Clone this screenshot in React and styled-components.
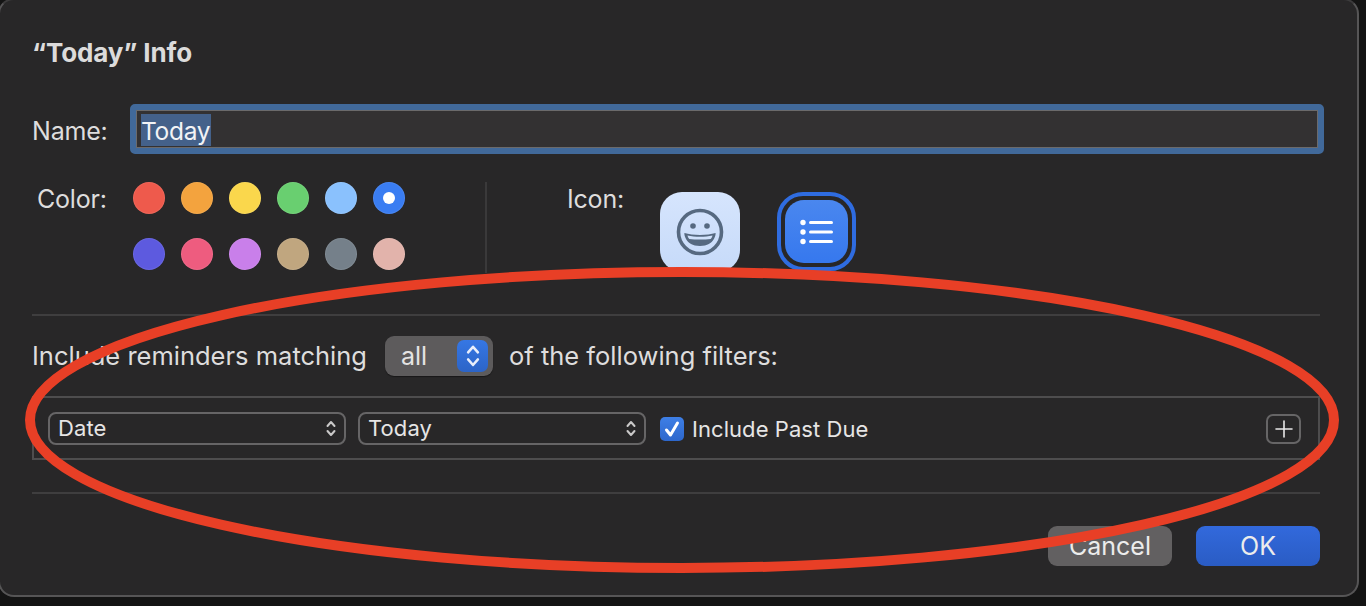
import React from "react";
import styled, { createGlobalStyle } from "styled-components";

const Global = createGlobalStyle`
  html, body {
    margin: 0;
    height: 606px;
    overflow: hidden;
    background: #141414;
  }
  * { box-sizing: border-box; }
`;

const Page = styled.div`
  position: relative;
  width: 1366px;
  height: 606px;
  overflow: hidden;
  background: #141414;
  font-family: Inter, "Liberation Sans", sans-serif;
  color: #dedddd;
`;

/* 창 전체, 왼쪽 위는 화면 밖으로 살짝 잘림 */
const Sheet = styled.div`
  width: 1361px;
  height: 599px;
  margin: -2px 0 0 -2px;
  padding: 0 37px 0 34px;
  background: #282728;
  border: 2px solid #565556;
  border-top-color: #3c3b3c;
  border-radius: 16px;
  display: flex;
  flex-direction: column;
`;

const Title = styled.h1`
  margin: 39px 0 0 -2px;
  height: 28px;
  font-size: 26px;
  line-height: 28px;
  font-weight: 700;
  letter-spacing: -0.1px;
  color: #dcdbdb;
`;

const NameRow = styled.div`
  display: flex;
  align-items: center;
  margin: 37px 0 0 -2px;
  height: 50px;
`;

const Label = styled.span`
  font-size: 25px;
  line-height: 30px;
  letter-spacing: -0.2px;
  color: #dedddd;
`;

const MatchLabel = styled(Label)`
  font-size: 25.5px;
  letter-spacing: 0;
`;

const NameLabel = styled(Label)`
  width: 98px;
  padding-top: 4px;
`;

const NameField = styled.div`
  flex: 1;
  height: 50px;
  margin-right: -4px;
  border: 6px solid #41699a;
  border-radius: 5px;
  padding: 4px 5px 0;
  background: #333132;
  box-shadow: inset 0 0 0 1px #6b6a6b;
`;

const Selected = styled.span`
  display: inline-block;
  height: 32px;
  padding: 0 1px 0 0;
  background: #44618a;
  font-size: 24.5px;
  line-height: 35px;
  letter-spacing: -0.3px;
  color: #f2f3f5;
`;

const Appearance = styled.div`
  display: flex;
  margin-top: 28px;
  height: 91px;
`;

const ColorSection = styled.div`
  display: flex;
  width: 453px;
  height: 91px;
  border-right: 2px solid #3a393a;
`;

const ColorLabel = styled(Label)`
  width: 96px;
  margin: 2px 0 0 3px;
`;

const Swatches = styled.div`
  display: grid;
  grid-template-columns: repeat(6, 32px);
  grid-auto-rows: 32px;
  gap: 24px 16px;
`;

const Swatch = styled.div`
  width: 32px;
  height: 32px;
  border-radius: 50%;
  background: ${(p) => p.$color};
  box-shadow: inset 0 0 0 1px rgba(255, 255, 255, 0.08);
  display: flex;
  align-items: center;
  justify-content: center;
`;

const SwatchDot = styled.div`
  width: 12px;
  height: 12px;
  border-radius: 50%;
  background: #fff;
`;

const IconSection = styled.div`
  display: flex;
  margin-left: 80px;
`;

const IconLabel = styled(Label)`
  width: 93px;
  margin-top: 2px;
`;

const IconTile = styled.div`
  width: 80px;
  height: 80px;
  margin-top: 10px;
  border-radius: 22px;
  background: linear-gradient(#d6e5fd, #c6daf9);
  display: flex;
  align-items: center;
  justify-content: center;
`;

const ListTile = styled.div`
  width: 79px;
  height: 79px;
  margin: 10px 0 0 37px;
  border-radius: 26px;
  border: 4px solid #2f6ce0;
  padding: 4px;
`;

const ListFace = styled.div`
  width: 100%;
  height: 100%;
  border-radius: 19px;
  background: linear-gradient(#4a87ef, #3678ee);
  display: flex;
  align-items: center;
  justify-content: center;
`;

const Rule = styled.hr`
  margin: ${(p) => p.$top}px 0 0 -2px;
  border: 0;
  height: 2px;
  background: #3f3e3f;
`;

const MatchRow = styled.div`
  display: flex;
  align-items: center;
  height: 40px;
  margin: 20px 0 0 -2px;
`;

const AllSelect = styled.div`
  width: 108px;
  height: 40px;
  margin: 0 16px 0 18px;
  padding: 4px 5px 4px 16px;
  border-radius: 9px;
  background: #5d5b5c;
  box-shadow: 0 1px 1px rgba(0, 0, 0, 0.4);
  display: flex;
  align-items: center;
  justify-content: space-between;
  font-size: 25px;
  color: #e4e3e3;
`;

const Stepper = styled.div`
  width: 31px;
  height: 32px;
  border-radius: 7px;
  background: linear-gradient(#3677e4, #2c64c7);
  display: flex;
  align-items: center;
  justify-content: center;
`;

const FilterBox = styled.div`
  display: flex;
  align-items: center;
  height: 64px;
  margin: 20px 0 0 -2px;
  padding: 0 17px 0 14px;
  border: 2px solid #4e4d4e;
`;

const Popup = styled.div`
  width: ${(p) => p.$width}px;
  height: 33px;
  margin-right: ${(p) => p.$gap}px;
  padding: 0 8px;
  border: 2px solid #666566;
  border-radius: 8px;
  display: flex;
  align-items: center;
  justify-content: space-between;
  font-size: 22px;
  letter-spacing: 0.1px;
  color: #e6e5e5;
`;

const Check = styled.div`
  width: 24px;
  height: 24px;
  margin: 2px 8px 0 2px;
  border-radius: 5px;
  background: linear-gradient(#3e7fe6, #2d67cc);
  display: flex;
  align-items: center;
  justify-content: center;
`;

const CheckLabel = styled.span`
  flex: 1;
  margin-top: 2px;
  font-size: 22px;
  letter-spacing: 0.06px;
  color: #e6e5e5;
`;

const PlusButton = styled.div`
  width: 35px;
  height: 30px;
  margin-top: 1px;
  border: 2px solid #666566;
  border-radius: 7px;
  display: flex;
  align-items: center;
  justify-content: center;
`;

const Actions = styled.div`
  display: flex;
  justify-content: flex-end;
  gap: 24px;
  margin-top: 32px;
`;

const Button = styled.div`
  width: 124px;
  height: 40px;
  border-radius: 9px;
  background: ${(p) => (p.$primary ? "linear-gradient(#3269dc, #2a5cc4)" : "#626061")};
  display: flex;
  align-items: center;
  justify-content: center;
  font-size: 25px;
  color: #ececec;
`;

/* 빨간 동그라미 표시는 화면 위에 덮어 그림 */
const Annotation = styled.svg`
  position: absolute;
  inset: 0;
  pointer-events: none;
`;

const SmileIcon = () => (
  <svg width="48" height="48" viewBox="0 0 48 48">
    <circle cx="24" cy="24" r="21.5" fill="none" stroke="#566980" strokeWidth="3.6" />
    <circle cx="17" cy="18" r="2.8" fill="#566980" />
    <circle cx="31" cy="18" r="2.8" fill="#566980" />
    <path d="M8.500 25c8 2.600 23 2.600 31 0 .6 0-.4 13-15.500 13S7.900 25 8.500 25Z" fill="#566980" />
    <path d="M11.500 27.500c7.500 1.700 17.500 1.700 25 0-.3 1.500-1 2.600-1.800 3.400-6.500.9-14.900.9-21.400 0-.8-.8-1.500-1.900-1.800-3.400Z" fill="#d0e1fb" />
  </svg>
);

const ListIcon = () => (
  <svg width="36" height="30" viewBox="0 0 36 30">
    <circle cx="4" cy="5.500" r="2.700" fill="#fff" />
    <circle cx="4" cy="15" r="2.700" fill="#fff" />
    <circle cx="4" cy="24.500" r="2.700" fill="#fff" />
    <rect x="10" y="4" width="24" height="3" rx="1.500" fill="#fff" />
    <rect x="10" y="13.500" width="24" height="3" rx="1.500" fill="#fff" />
    <rect x="10" y="23" width="24" height="3" rx="1.500" fill="#fff" />
  </svg>
);

const Chevrons = ({ size = 10, color = "#c9c8c8", width = 2 }) => (
  <svg width={size} height={size * 1.7} viewBox="0 0 10 17" fill="none" stroke={color} strokeWidth={width} strokeLinecap="round" strokeLinejoin="round">
    <path d="M1.500 6 5 2l3.500 4" />
    <path d="M1.500 11 5 15l3.500-4" />
  </svg>
);

const colors = [
  "#ee5a4c", "#f3a33e", "#fad74c", "#69cf70", "#8ac1fd", "#3a7df2",
  "#5d5adf", "#ee5c7f", "#c97fea", "#c0a67f", "#75808a", "#e2b3ab",
];

export default function App() {
  return (
    <Page>
      <Global />
      <Sheet>
        <Title>“Today” Info</Title>
        <NameRow>
          <NameLabel>Name:</NameLabel>
          <NameField>
            <Selected>Today</Selected>
          </NameField>
        </NameRow>
        <Appearance>
          <ColorSection>
            <ColorLabel>Color:</ColorLabel>
            <Swatches>
              {colors.map((c, i) => (
                <Swatch key={c} $color={c}>{i === 5 && <SwatchDot />}</Swatch>
              ))}
            </Swatches>
          </ColorSection>
          <IconSection>
            <IconLabel>Icon:</IconLabel>
            <IconTile><SmileIcon /></IconTile>
            <ListTile>
              <ListFace><ListIcon /></ListFace>
            </ListTile>
          </IconSection>
        </Appearance>
        <Rule $top={41} />
        <MatchRow>
          <MatchLabel>Include reminders matching</MatchLabel>
          <AllSelect>
            all
            <Stepper><Chevrons size={14} color="#e8eefb" width={1.800} /></Stepper>
          </AllSelect>
          <MatchLabel>of the following filters:</MatchLabel>
        </MatchRow>
        <FilterBox>
          <Popup $width={298} $gap={12}>Date<Chevrons /></Popup>
          <Popup $width={288} $gap={12}>Today<Chevrons /></Popup>
          <Check>
            <svg width="18" height="18" viewBox="0 0 18 18" fill="none" stroke="#fff" strokeWidth="3" strokeLinecap="round" strokeLinejoin="round">
              <path d="M3.500 10 7.500 15 14.500 3" />
            </svg>
          </Check>
          <CheckLabel>Include Past Due</CheckLabel>
          <PlusButton>
            <svg width="20" height="20" viewBox="0 0 20 20" stroke="#e8e8e8" strokeWidth="1.600" strokeLinecap="round">
              <path d="M10 2v16M2 10h16" />
            </svg>
          </PlusButton>
        </FilterBox>
        <Rule $top={32} />
        <Actions>
          <Button>Cancel</Button>
          <Button $primary>OK</Button>
        </Actions>
      </Sheet>
      <Annotation width="1366" height="606" viewBox="0 0 1366 606">
        <ellipse cx="682" cy="420" rx="652" ry="148" fill="none" stroke="#e83f26" strokeWidth="10" />
      </Annotation>
    </Page>
  );
}
